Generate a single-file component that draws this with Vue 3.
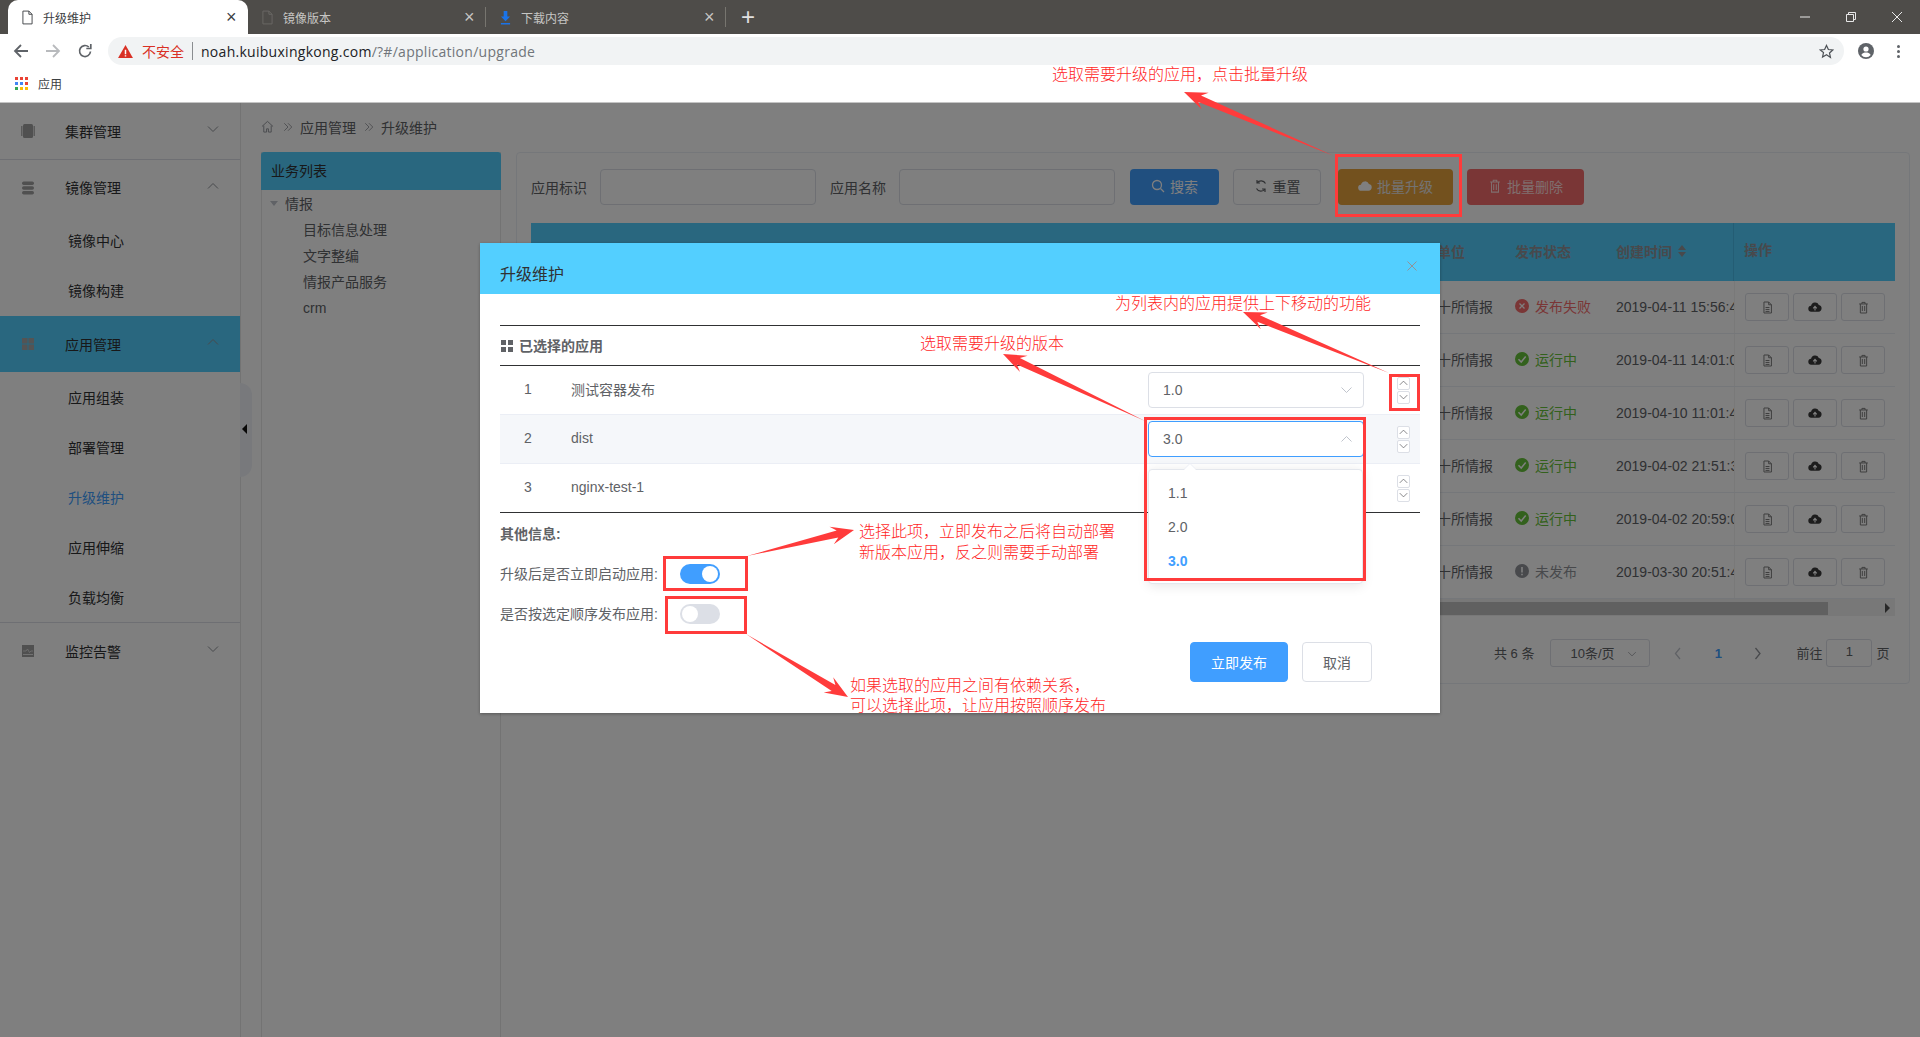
<script setup>
const subA = ['镜像中心', '镜像构建']
const subB = ['应用组装', '部署管理', '升级维护', '应用伸缩', '负载均衡']
const tree = ['目标信息处理', '文字整编', '情报产品服务', 'crm']
const rows = [
  { s: '发布失败', k: 'bad', d: '2019-04-11 15:56:41' },
  { s: '运行中', k: 'ok', d: '2019-04-11 14:01:09' },
  { s: '运行中', k: 'ok', d: '2019-04-10 11:01:42' },
  { s: '运行中', k: 'ok', d: '2019-04-02 21:51:36' },
  { s: '运行中', k: 'ok', d: '2019-04-02 20:59:08' },
  { s: '未发布', k: 'none', d: '2019-03-30 20:51:47' }
]
const apps = [
  { n: 1, name: '测试容器发布', v: '1.0', open: false },
  { n: 2, name: 'dist', v: '3.0', open: true },
  { n: 3, name: 'nginx-test-1', v: '', open: false }
]
const boxes = [
  [1336.5, 155.5, 124, 60],
  [1390.5, 375.5, 28, 34],
  [1145.5, 418.5, 219, 161],
  [664.5, 557.5, 82, 32],
  [666.5, 597.5, 79, 35]
]
function arrow(x1, y1, x2, y2) {
  const dx = x2 - x1, dy = y2 - y1
  const len = Math.hypot(dx, dy)
  const ux = dx / len, uy = dy / len
  const px = -uy, py = ux
  const at = (d, w) => `${(x2 - ux * d + px * w).toFixed(1)},${(y2 - uy * d + py * w).toFixed(1)}`
  return [`${x1},${y1}`, at(17, 3.5), at(23, 9), `${x2},${y2}`, at(23, -9), at(17, -3.5)].join(' ')
}
const arrows = [
  arrow(1334, 156, 1184, 92),
  arrow(1389, 373, 1243, 312),
  arrow(1145, 421, 1003, 354),
  arrow(747, 556, 854, 530),
  arrow(746, 634, 848, 697)
]
</script>

<template>
  <div class="root">
    <svg class="defs" width="0" height="0">
      <symbol id="doc" viewBox="0 0 14 16"><path d="M2.5 1h6l3.5 3.5V15h-9.500zM8.500 1v3.500H12M4.500 8h5M4.500 10.500h5M4.500 13h5" fill="none" stroke="currentColor" stroke-width="1.200"/></symbol>
      <symbol id="cloud" viewBox="0 0 16 14"><path d="M4 12.500a3.500 3.500 0 0 1-.6-7A4.800 4.800 0 0 1 12.500 4.600 4 4 0 0 1 12 12.500z" fill="currentColor"/><path d="M8 11V6.500M5.900 8.500 8 6.300l2.100 2.200" fill="none" stroke="#fff" stroke-width="1.300"/></symbol>
      <symbol id="trash" viewBox="0 0 14 16"><path d="M1.500 3.500h11M5 3.500V1.500h4v2M3 3.500V15h8V3.500M5.500 6v6.500M8.500 6v6.500" fill="none" stroke="currentColor" stroke-width="1.200"/></symbol>
      <symbol id="down" viewBox="0 0 12 8"><path d="M1 1.500 6 6.500l5-5" fill="none" stroke="currentColor" stroke-width="1"/></symbol>
      <symbol id="up" viewBox="0 0 12 8"><path d="M1 6.500 6 1.500l5 5" fill="none" stroke="currentColor" stroke-width="1"/></symbol>
      <symbol id="dbl" viewBox="0 0 12 12"><path d="M1.500 1.500 6 6l-4.500 4.500M6 1.500 10.500 6 6 10.500" fill="none" stroke="currentColor" stroke-width="1"/></symbol>
    </svg>

    <header class="chrome">
      <div class="tabbar">
        <div class="tab active">
          <svg class="tab-ic" viewBox="0 0 12 16"><path d="M1 1h6.500L11 4.500V15H1zM7.500 1v3.500H11" fill="none" stroke="#3c4043"/></svg>
          <span class="tab-t">升级维护</span><span class="tab-x">×</span>
        </div>
        <div class="tab sep narrow">
          <svg class="tab-ic" viewBox="0 0 12 16"><path d="M1 1h6.500L11 4.500V15H1zM7.500 1v3.500H11" fill="none" stroke="#6b6966"/></svg>
          <span class="tab-t">镜像版本</span><span class="tab-x">×</span>
        </div>
        <div class="tab sep">
          <svg class="tab-ic" viewBox="0 0 12 16"><path d="M4 1h4v6h3L6 12 1 7h3zM1 14h10v1.500H1z" fill="#1a73e8"/></svg>
          <span class="tab-t">下载内容</span><span class="tab-x">×</span>
        </div>
        <span class="plus">+</span>
        <div class="winctl">
          <svg viewBox="0 0 12 12"><path d="M1 6h10" stroke="#e8e8e8" fill="none"/></svg>
          <svg viewBox="0 0 12 12"><path d="M1.500 3.500h7v7h-7zM3.500 3.500v-2h7v7h-2" stroke="#e8e8e8" fill="none"/></svg>
          <svg viewBox="0 0 12 12"><path d="M1 1l10 10M11 1 1 11" stroke="#e8e8e8" fill="none"/></svg>
        </div>
      </div>

      <div class="toolbar">
        <span class="navbtn"><svg viewBox="0 0 16 16"><path d="M15 8H2.500M8 2 2 8l6 6" fill="none" stroke="#5f6368" stroke-width="1.800"/></svg></span>
        <span class="navbtn"><svg viewBox="0 0 16 16"><path d="M1 8h12.500M8 2l6 6-6 6" fill="none" stroke="#b8babd" stroke-width="1.800"/></svg></span>
        <span class="navbtn"><svg viewBox="0 0 16 16"><path d="M13.500 8.500A5.500 5.500 0 1 1 11.800 4M13.800 1v4.500H9.300" fill="none" stroke="#5f6368" stroke-width="1.700"/></svg></span>
        <div class="omni">
          <svg class="warn" viewBox="0 0 16 14"><path d="M8 0l8 14H0z" fill="#d93025"/><path d="M7.200 5h1.600v5H7.200zM7.200 11h1.600v1.500H7.200z" fill="#fff"/></svg>
          <span class="unsafe">不安全</span>
          <i class="omni-sep"></i>
          <span class="url"><b>noah.kuibuxingkong.com</b>/?#/application/upgrade</span>
          <svg class="star" viewBox="0 0 16 16"><path d="M8 1.500l2 4.400 4.700.5-3.500 3.200 1 4.700L8 11.400l-4.200 2.400 1-4.700L1.300 6.400 6 5.900z" fill="none" stroke="#4d5156" stroke-width="1.300"/></svg>
        </div>
        <svg class="profile" viewBox="0 0 16 16"><circle cx="8" cy="8" r="8" fill="#5f6368"/><circle cx="8" cy="6" r="2.600" fill="#fff"/><path d="M3.300 12c1-2 3-2.500 4.700-2.500s3.700.5 4.700 2.500A6 6 0 0 1 3.300 12z" fill="#fff"/></svg>
        <span class="dots"><i></i><i></i><i></i></span>
      </div>

      <div class="bookmarks">
        <svg class="apps" viewBox="0 0 13 13">
          <g fill="#ea4335"><rect width="3" height="3"/><rect x="5" width="3" height="3"/><rect x="10" width="3" height="3"/></g>
          <g fill="#4285f4"><rect y="5" width="3" height="3"/><rect x="5" y="5" width="3" height="3"/></g>
          <rect x="10" y="5" width="3" height="3" fill="#ea4335"/>
          <g fill="#34a853"><rect y="10" width="3" height="3"/></g>
          <g fill="#fbbc05"><rect x="5" y="10" width="3" height="3"/><rect x="10" y="10" width="3" height="3"/></g>
        </svg>
        <span>应用</span>
      </div>
    </header>

    <main class="page">
      <aside class="side">
        <div class="group line">
          <div class="gtitle">
            <svg class="gic" viewBox="0 0 14 14"><rect x="2" y="0" width="10" height="14" rx="1.500" fill="#a0a0a0"/><rect y="2" width="1.500" height="10" fill="#b4b4b4"/><rect x="12.500" y="2" width="1.500" height="10" fill="#b4b4b4"/></svg>
            <span>集群管理</span><svg class="chev"><use href="#down"/></svg>
          </div>
        </div>
        <div class="group g2">
          <div class="gtitle">
            <svg class="gic" viewBox="0 0 14 14"><g fill="#a0a0a0"><rect x="1" y="0.500" width="12" height="3.500" rx="1.700"/><rect x="1" y="5.200" width="12" height="3.500" rx="1.700"/><rect x="1" y="10" width="12" height="3.500" rx="1.700"/></g></svg>
            <span>镜像管理</span><svg class="chev"><use href="#up"/></svg>
          </div>
          <div v-for="s in subA" :key="s" class="sub">{{ s }}</div>
        </div>
        <div class="group line g3">
          <div class="gtitle on">
            <svg class="gic" viewBox="0 0 14 14"><g fill="#a8a8a8"><rect x="1" y="1" width="5.500" height="5.500"/><rect x="7.500" y="1" width="5.500" height="5.500"/><rect x="1" y="7.500" width="5.500" height="5.500"/><rect x="7.500" y="7.500" width="5.500" height="5.500"/></g></svg>
            <span>应用管理</span><svg class="chev"><use href="#up"/></svg>
          </div>
          <div v-for="s in subB" :key="s" class="sub" :class="{ cur: s === '升级维护' }">{{ s }}</div>
        </div>
        <div class="group">
          <div class="gtitle">
            <svg class="gic" viewBox="0 0 14 14"><rect x="1" y="1" width="12" height="12" fill="#a0a0a0"/><path d="M2 7h3l1.500-2 2 3.500L10 7h2" fill="none" stroke="#e4e4e4" stroke-width=".8"/><rect x="2" y="10" width="10" height="1" fill="#e4e4e4"/></svg>
            <span>监控告警</span><svg class="chev"><use href="#down"/></svg>
          </div>
        </div>
        <div class="handle"><i></i></div>
      </aside>

      <section class="content">
        <nav class="crumb">
          <svg class="home" viewBox="0 0 14 14"><path d="M1 7 7 1.500 13 7M3 6v7h3V9.500h2V13h3V6" fill="none" stroke="#909399"/></svg>
          <svg class="dbl"><use href="#dbl"/></svg>
          <span>应用管理</span>
          <svg class="dbl"><use href="#dbl"/></svg>
          <span>升级维护</span>
        </nav>

        <div class="panes">
          <div class="tree">
            <div class="tree-h">业务列表</div>
            <div class="tree-root"><i class="caret"></i>情报</div>
            <div v-for="t in tree" :key="t" class="tree-leaf">{{ t }}</div>
          </div>

          <div class="card">
            <div class="form">
              <label>应用标识</label><span class="inp"></span>
              <label>应用名称</label><span class="inp"></span>
              <button class="btn b-search">
                <svg viewBox="0 0 14 14"><circle cx="6" cy="6" r="4.500" fill="none" stroke="currentColor" stroke-width="1.300"/><path d="M9.500 9.500 13 13" stroke="currentColor" stroke-width="1.300"/></svg>搜索
              </button>
              <button class="btn b-reset">
                <svg viewBox="0 0 14 14"><path d="M11.500 4.500A5 5 0 0 0 3 4M2.500 9.500A5 5 0 0 0 11 10M3 1v3h3M11 13v-3H8" fill="none" stroke="currentColor" stroke-width="1.200"/></svg>重置
              </button>
              <button class="btn b-up"><svg viewBox="0 0 16 14"><use href="#cloud"/></svg>批量升级</button>
              <button class="btn b-del"><svg viewBox="0 0 14 16"><use href="#trash"/></svg>批量删除</button>
            </div>

            <div class="table">
              <div class="thead">
                <span></span><span>所属单位</span><span>发布状态</span>
                <span class="sort">创建时间<em><i class="s-up"></i><i class="s-dn"></i></em></span>
                <span class="ops-h">操作</span>
              </div>
              <div v-for="r in rows" :key="r.d" class="tr">
                <span></span>
                <span class="org">第二十所情报</span>
                <span class="st" :class="r.k">
                  <svg viewBox="0 0 14 14">
                    <circle cx="7" cy="7" r="7" fill="currentColor"/>
                    <path v-if="r.k === 'bad'" d="M4.500 4.500l5 5M9.500 4.500l-5 5" stroke="#fff" stroke-width="1.300"/>
                    <path v-else-if="r.k === 'ok'" d="M3.500 7.200 6.200 10l4.500-5.500" fill="none" stroke="#fff" stroke-width="1.500"/>
                    <path v-else d="M6.200 3h1.600v5.500H6.200zM6.200 9.700h1.600v1.500H6.200z" fill="#fff"/>
                  </svg>{{ r.s }}
                </span>
                <span class="date">{{ r.d }}</span>
                <span class="ops">
                  <i class="op"><svg class="o1"><use href="#doc"/></svg></i>
                  <i class="op"><svg class="o2"><use href="#cloud"/></svg></i>
                  <i class="op"><svg class="o1"><use href="#trash"/></svg></i>
                </span>
              </div>
              <div class="scroll"><i></i><em></em></div>
            </div>

            <div class="pager">
              <span class="ptx">共 6 条</span>
              <span class="psel">10条/页<svg class="chev"><use href="#down"/></svg></span>
              <svg class="pg"><path d="M6 1 1.500 6.500 6 12" fill="none" stroke="#c0c4cc" stroke-width="1.300"/></svg>
              <span class="pnum">1</span>
              <svg class="pg"><path d="M1.500 1 6 6.500 1.500 12" fill="none" stroke="#909399" stroke-width="1.300"/></svg>
              <span class="pgo ptx">前往</span>
              <span class="pinp">1</span>
              <span class="pye ptx">页</span>
            </div>
          </div>
        </div>
      </section>

      <div class="mask">
        <div class="dialog">
          <div class="d-head">
            <span>升级维护</span>
            <svg viewBox="0 0 12 12"><path d="M1.500 1.500l9 9M10.500 1.500l-9 9" stroke="#909399" fill="none"/></svg>
          </div>
          <div class="d-body">
            <div class="sec">
              <svg viewBox="0 0 12 12"><g fill="#606266"><rect width="5" height="5"/><rect x="7" width="5" height="5"/><rect y="7" width="5" height="5"/><rect x="7" y="7" width="5" height="5"/></g></svg>
              <span>已选择的应用</span>
            </div>
            <div class="apps-list">
              <div v-for="a in apps" :key="a.n" class="app" :class="{ alt: a.n === 2 }">
                <span class="a-no">{{ a.n }}</span>
                <span class="a-name">{{ a.name }}</span>
                <span v-if="a.v" class="sel" :class="{ open: a.open }">
                  {{ a.v }}
                  <svg class="sel-ch"><use :href="a.open ? '#up' : '#down'"/></svg>
                </span>
                <span class="mv">
                  <i><svg><use href="#up"/></svg></i>
                  <i><svg><use href="#down"/></svg></i>
                </span>
              </div>
            </div>
            <div class="other">其他信息:</div>
            <div class="opt">
              <span>升级后是否立即启动应用:</span><i class="sw on"></i>
            </div>
            <div class="opt">
              <span>是否按选定顺序发布应用:</span><i class="sw"></i>
            </div>
            <div class="foot">
              <button class="go">立即发布</button>
              <button class="no">取消</button>
            </div>
          </div>
          <div class="drop">
            <i class="tip"></i>
            <div class="di">1.1</div>
            <div class="di">2.0</div>
            <div class="di sel-i">3.0</div>
          </div>
        </div>
      </div>
    </main>

    <div class="notes">
      <svg class="marks" viewBox="0 0 1920 1037">
        <polygon v-for="(p, i) in arrows" :key="i" :points="p" fill="#ff3b3b"/>
        <rect v-for="(b, i) in boxes" :key="'b' + i" :x="b[0]" :y="b[1]" :width="b[2]" :height="b[3]" fill="none" stroke="#ff3b3b" stroke-width="3"/>
      </svg>
      <span class="note n1">选取需要升级的应用，点击批量升级</span>
      <span class="note n2">为列表内的应用提供上下移动的功能</span>
      <span class="note n3">选取需要升级的版本</span>
      <span class="note n4">选择此项，立即发布之后将自动部署<br>新版本应用，反之则需要手动部署</span>
      <span class="note n5">如果选取的应用之间有依赖关系，<br>可以选择此项，让应用按照顺序发布</span>
    </div>
  </div>
</template>

<style>
html, body { margin: 0; overflow: hidden; background: #fff; }
</style>

<style scoped>
.root { position: relative; width: 1920px; height: 1037px; overflow: hidden; background: #fff; font: 14px "Liberation Sans", "Noto Sans CJK SC", sans-serif; color: #303133; }
.defs { position: absolute; }
i, em { font-style: normal; display: block; }
button { font: inherit; cursor: pointer; }

/* browser chrome */
.chrome { height: 102px; border-bottom: 1px solid #c4c4c4; }
.tabbar { height: 34px; background: #4e4c49; display: flex; padding-left: 8px; box-sizing: border-box; }
.tab { width: 240px; height: 34px; box-sizing: border-box; display: flex; align-items: center; padding-left: 14px; color: #c6c6c4; font-size: 12px; position: relative; }
.tab.narrow { width: 238px; }
.tab.active { background: #fff; color: #3c4043; border-radius: 10px 10px 0 0; }
.tab.sep::after { content: ""; position: absolute; right: 0; top: 7px; height: 20px; width: 1px; background: #77756f; }
.tab-ic { width: 11px; height: 15px; margin-right: 10px; flex: none; }
.tab-t { flex: 1; }
.tab-x { width: 26px; font-size: 18px; line-height: 20px; text-align: left; padding-left: 4px; box-sizing: border-box; }
.plus { color: #e0e0e0; font-size: 24px; line-height: 34px; margin-left: 15px; font-weight: 300; }
.winctl { margin-left: auto; display: flex; align-items: center; gap: 34px; padding-right: 17px; }
.winctl svg { width: 12px; height: 12px; }
.toolbar { height: 34px; display: flex; align-items: center; padding-left: 5px; background: #fff; }
.navbtn { width: 32px; display: flex; justify-content: center; }
.navbtn svg { width: 16px; height: 16px; }
.omni { margin-left: 7px; width: 1736px; height: 28px; border-radius: 14px; background: #f1f3f4; display: flex; align-items: center; padding-left: 10px; box-sizing: border-box; }
.warn { width: 15px; height: 13px; flex: none; }
.unsafe { color: #d93025; font-size: 14px; margin-left: 9px; }
.omni-sep { width: 1px; height: 18px; background: #8a8d90; margin: 0 8px; }
.url { flex: 1; font: 14px "Open Sans", "Noto Sans", sans-serif; color: #70757a; letter-spacing: .28px; }
.url b { font-weight: 400; color: #202124; }
.star { width: 15px; height: 15px; margin-right: 10px; }
.profile { width: 16px; height: 16px; margin-left: 14px; }
.dots { margin-left: 23px; display: flex; flex-direction: column; gap: 2px; }
.dots i { width: 3px; height: 3px; border-radius: 50%; background: #5f6368; }
.bookmarks { height: 31px; display: flex; align-items: center; padding-left: 15px; font-size: 12px; color: #3c4043; gap: 10px; }
.apps { width: 13px; height: 13px; }

/* page */
.page { position: relative; height: 934px; display: flex; }
.side { position: relative; width: 240px; flex: none; border-right: 1px solid #e6e6e6; box-sizing: content-box; }
.group.line { border-bottom: 1px solid #dcdfe6; }
.gtitle { height: 56px; display: flex; align-items: center; padding-left: 21px; }
.gtitle span { flex: 1; margin-left: 30px; }
.g2 .gtitle span { margin-bottom: 2px; }
.gtitle.on { background: #53cfff; }
.gic { width: 14px; height: 14px; flex: none; }
.chev { width: 12px; height: 8px; color: #909399; margin-right: 21px; margin-bottom: 5px; }
.sub { height: 50px; line-height: 50px; padding-left: 68px; }
.g3 .sub { line-height: 52px; }
.sub.cur { color: #409eff; }
.handle { position: absolute; left: 240px; top: 280px; width: 12px; height: 94px; background: #f0f3f8; border-radius: 0 12px 12px 0; }
.handle i { position: absolute; left: 2px; top: 41px; border: 5px solid transparent; border-right: 5px solid #111; border-left: 0; }

.content { flex: 1; min-width: 0; padding-left: 20px; }
.crumb { height: 47px; margin-bottom: 2px; display: flex; align-items: center; color: #606266; }
.home { width: 13px; height: 13px; margin-right: 7px; }
.dbl { width: 10px; height: 10px; color: #909399; margin: 0 7px 0 2px; }
.crumb span + .dbl { margin-left: 8px; margin-right: 7px; }
.panes { display: flex; gap: 15px; height: 885px; }
.tree { width: 240px; box-sizing: border-box; border-left: 1px solid #e6e6e6; border-right: 1px solid #e6e6e6; color: #606266; margin-right: 0; }
.tree-h { height: 38px; line-height: 38px; margin: 0 -1px; padding-left: 10px; background: #53cfff; color: #303133; border-radius: 3px 3px 0 0; }
.tree-root { height: 27px; line-height: 28px; padding-left: 23px; position: relative; }
.caret { position: absolute; left: 8px; top: 11px; border: 4px solid transparent; border-top: 5px solid #c0c4cc; border-bottom: 0; }
.tree-leaf { height: 26px; line-height: 26px; padding-left: 41px; }
.card { width: 1394px; height: 532px; box-sizing: border-box; border: 1px solid #ebeef5; border-radius: 4px; padding: 16px 14px 0; }
.form { height: 36px; display: flex; align-items: center; color: #606266; }
.form label { width: 69px; flex: none; padding-bottom: 1px; }
.inp { width: 216px; height: 36px; box-sizing: border-box; border: 1px solid #dcdfe6; border-radius: 4px; margin-right: 14px; flex: none; }
.inp + label + .inp { margin-right: 15px; }
.btn { height: 36px; border: 1px solid transparent; border-radius: 4px; display: flex; align-items: center; justify-content: center; gap: 5px; color: #fff; padding: 0 0 2px; font-size: 14px; flex: none; }
.btn svg { width: 14px; height: 14px; }
.b-search { width: 89px; background: #409eff; margin-right: 14px; }
.b-reset { width: 88px; background: #fff; border-color: #dcdfe6; color: #606266; margin-right: 17px; }
.b-up { width: 115px; background: #e6a23c; margin-right: 14px; color: #e6e6e6; }
.b-up svg { color: #fff; }
.b-del { width: 117px; background: #f56c6c; color: #ffdcdc; }

.table { margin-top: 18px; font-size: 14px; }
.thead, .tr { display: grid; grid-template-columns: 878px 106px 101px 118px 161px; align-items: center; }
.thead { height: 58px; background: #53cfff; color: #909399; font-weight: 700; }
.thead > span { padding-bottom: 2px; }
.sort { display: flex; align-items: center; gap: 6px; }
.sort em { display: flex; flex-direction: column; gap: 2px; }
.s-up { border: 4px solid transparent; border-bottom: 5px solid #909399; border-top: 0; }
.s-dn { border: 4px solid transparent; border-top: 5px solid #909399; border-bottom: 0; }
.thead > .ops-h { padding: 0 0 0 10px; box-shadow: -1px 0 0 #49bbe8; height: 58px; line-height: 55px; }
.tr { height: 53px; box-sizing: border-box; border-bottom: 1px solid #ebeef5; color: #606266; }
.org, .st { padding-bottom: 2px; }
.st { display: flex; align-items: center; gap: 6px; }
.st svg { width: 14px; height: 14px; flex: none; }
.st.bad { color: #f56c6c; }
.st.ok { color: #67c23a; }
.st.none { color: #909399; }
.date { white-space: nowrap; overflow: hidden; }
.ops { display: flex; gap: 4px; padding-left: 10px; height: 52px; align-items: center; border-left: 1px solid #f2f2f2; box-sizing: border-box; }
.op { width: 44px; height: 28px; box-sizing: border-box; border: 1px solid #dcdfe6; border-radius: 3px; display: flex; align-items: center; justify-content: center; color: #777; }
.o1 { width: 11px; height: 13px; }
.o2 { width: 14px; height: 12px; color: #3a3a3a; }
.scroll { height: 17px; background: #f1f1f1; position: relative; }
.scroll i { position: absolute; left: 0; right: 67px; top: 3px; height: 13px; background: #c1c1c1; }
.scroll em { position: absolute; right: 5px; top: 4px; border: 5px solid transparent; border-left: 5px solid #505050; border-right: 0; }
.pager { margin-top: 23px; height: 28px; display: flex; align-items: center; font-size: 13px; color: #606266; padding-left: 963px; }
.ptx { margin-bottom: 2px; }
.psel { width: 100px; height: 28px; box-sizing: border-box; border: 1px solid #dcdfe6; border-radius: 3px; margin-left: 16px; display: flex; align-items: center; padding: 0 0 2px 19px; position: relative; }
.psel .chev { position: absolute; right: -9px; top: 11px; width: 10px; height: 6px; }
.pg { width: 8px; height: 13px; flex: none; }
.psel + .pg { margin-left: 24px; }
.pnum { width: 72px; text-align: center; color: #409eff; font-weight: 700; }
.pgo { margin-left: 34px; }
.pinp { width: 46px; height: 28px; line-height: 24px; text-align: center; box-sizing: border-box; border: 1px solid #dcdfe6; border-radius: 3px; margin-left: 4px; }
.pye { margin-left: 4px; }

/* dialog */
.mask { position: absolute; inset: 0; background: rgba(0, 0, 0, .5); }
.dialog { position: absolute; left: 480px; top: 140px; width: 960px; height: 470px; background: #fff; box-shadow: 0 1px 3px rgba(0, 0, 0, .3); }
.d-head { height: 51px; background: #53cfff; display: flex; align-items: center; justify-content: space-between; padding: 9px 22px 0 20px; box-sizing: border-box; font-size: 16px; color: #303133; }
.d-head svg { width: 12px; height: 12px; margin-top: -15px; }
.d-body { padding: 31px 20px 0; }
.sec { height: 39px; border-top: 1px solid #303133; border-bottom: 1px solid #303133; display: flex; align-items: center; gap: 6px; font-weight: 700; font-size: 14px; color: #606266; padding-left: 1px; }
.sec span { margin-bottom: 2px; }
.sec svg { width: 12px; height: 12px; }
.apps-list { border-bottom: 1px solid #303133; }
.app { height: 49px; box-sizing: border-box; display: flex; align-items: center; color: #606266; padding-right: 10px; border-bottom: 1px solid #ebeef5; }
.app:last-child { border-bottom: 0; height: 48px; }
.app.alt { background: #f5f7fa; }
.a-no { width: 56px; text-align: center; flex: none; margin-bottom: 2px; }
.a-name { margin-left: 15px; flex: 1; margin-bottom: 2px; }
.sel { width: 216px; height: 36px; box-sizing: border-box; border: 1px solid #dcdfe6; border-radius: 4px; background: #fff; display: flex; align-items: center; padding-left: 14px; position: relative; flex: none; }
.sel.open { border-color: #409eff; }
.sel-ch { position: absolute; right: 10px; top: 13px; width: 13px; height: 8px; color: #c0c4cc; }
.mv { margin-left: 33px; display: flex; flex-direction: column; gap: 1px; flex: none; }
.mv i { width: 13px; height: 13px; box-sizing: border-box; border: 1px solid #dcdfe6; border-radius: 2px; background: #fff; color: #606266; display: flex; align-items: center; justify-content: center; }
.mv svg { width: 9px; height: 6px; }
.app:last-child .mv { margin-left: auto; }
.other { height: 20px; line-height: 22px; margin-top: 10px; font-weight: 700; font-size: 14px; color: #606266; }
.opt { display: flex; align-items: center; height: 20px; margin-top: 20px; color: #606266; font-size: 14px; }
.other + .opt { margin-top: 21px; }
.opt span { width: 180px; flex: none; white-space: nowrap; margin-bottom: 2px; }
.sw { width: 40px; height: 20px; border-radius: 10px; background: #dcdfe6; position: relative; }
.sw::after { content: ""; position: absolute; left: 2px; top: 2px; width: 16px; height: 16px; border-radius: 50%; background: #fff; }
.sw.on { background: #409eff; }
.sw.on::after { left: 22px; }
.foot { display: flex; gap: 14px; margin-top: 18px; padding-left: 690px; }
.foot button { height: 40px; border-radius: 4px; border: 1px solid #dcdfe6; background: #fff; color: #606266; padding: 0; }
.go { width: 98px; background: #409eff !important; border-color: #409eff !important; color: #fff !important; }
.no { width: 70px; }
.drop { position: absolute; left: 668px; top: 226px; width: 215px; height: 115px; box-sizing: border-box; padding: 6px 0; background: #fff; border: 1px solid #e4e7ed; border-radius: 4px; box-shadow: 0 2px 12px rgba(0, 0, 0, .1); }
.tip { position: absolute; left: 35px; top: -6px; border: 6px solid transparent; border-bottom: 6px solid #fff; border-top: 0; filter: drop-shadow(0 -1px 0 #ebeef5); }
.di { height: 34px; line-height: 34px; padding-left: 19px; color: #606266; }
.sel-i { color: #409eff; font-weight: 700; }

/* annotations */
.notes { position: absolute; inset: 0; pointer-events: none; }
.marks { position: absolute; left: 0; top: 0; width: 1920px; height: 1037px; }
.note { position: absolute; color: #ff1f1f; font-size: 16px; line-height: 21px; font-weight: 300; white-space: nowrap; font-family: "Noto Sans CJK SC", sans-serif; }
.n1 { left: 1052px; top: 63px; }
.n2 { left: 1115px; top: 292px; }
.n3 { left: 920px; top: 332px; }
.n4 { left: 859px; top: 520px; }
.n5 { left: 850px; top: 674px; line-height: 20px; }
</style>
